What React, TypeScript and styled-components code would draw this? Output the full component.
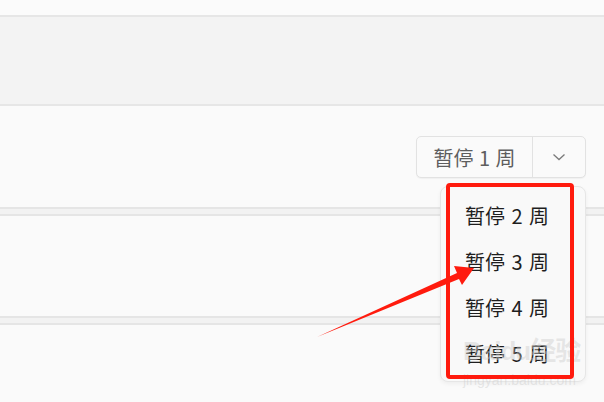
import React from 'react'
import styled, { createGlobalStyle } from 'styled-components'

const Global = createGlobalStyle`
  html, body {
    margin: 0;
    padding: 0;
    background: #fafafa;
    font-family: "Noto Sans CJK SC", "Noto Sans", sans-serif;
  }
`

const Page = styled.div`
  position: relative;
  width: 604px;
  height: 402px;
  overflow: hidden;
  background: #fafafa;
`

const TopStrip = styled.div`
  height: 15px;
  background: #fbfbfb;
`

const Band = styled.div`
  height: 87px;
  background: #f3f3f3;
  border-top: 2px solid #e6e6e6;
  border-bottom: 2px solid #e6e6e6;
`

const Toolbar = styled.div`
  height: 101px;
  display: flex;
  justify-content: flex-end;
  align-items: flex-start;
  padding: 30px 18px 0 0;
  box-sizing: border-box;
`

const SplitButton = styled.div`
  display: flex;
  height: 42px;
  border: 1px solid #e2e2e2;
  border-radius: 5px;
  background: #fafafa;
  box-sizing: border-box;
  box-shadow: 0 1px 1px rgba(0, 0, 0, 0.04);
`

const MainPart = styled.div`
  width: 115px;
  display: flex;
  align-items: center;
  justify-content: center;
  color: #5e5e5e;
  font-size: 20px;
  word-spacing: 1px;
  border-right: 1px solid #e2e2e2;
`

const ArrowPart = styled.div`
  width: 52px;
  display: flex;
  align-items: center;
  justify-content: center;
  color: #777;
`

const Divider = styled.div`
  height: 5px;
  background: #f2f2f2;
  border-top: 2px solid #e5e5e5;
  border-bottom: 2px solid #e5e5e5;
`

const Row = styled.div`
  height: 100px;
`

const Menu = styled.div`
  position: absolute;
  left: 440px;
  top: 186px;
  width: 146px;
  height: 196px;
  box-sizing: border-box;
  padding-top: 5px;
  border: 1px solid #e6e6e6;
  border-radius: 8px;
  background: #f9f9f9;
  box-shadow: 0 2px 4px rgba(0, 0, 0, 0.05);
`

const MenuItem = styled.div`
  height: 46px;
  display: flex;
  align-items: center;
  padding-left: 24px;
  font-size: 20px;
  word-spacing: 2px;
  color: #1e1e1e;
`

const Highlight = styled.div`
  position: absolute;
  left: 446px;
  top: 183px;
  width: 128px;
  height: 196px;
  box-sizing: border-box;
  border: 4px solid #ff1b0e;
  border-radius: 4px;
`

const Watermark = styled.div`
  position: absolute;
  left: 463px;
  top: 338px;
  color: rgba(205, 205, 205, 0.45);
  font-family: "Liberation Sans", "Noto Sans CJK SC", sans-serif;
  line-height: 1;
  pointer-events: none;
`

const WmBig = styled.div`
  font-size: 26px;
  font-weight: bold;
  letter-spacing: -1px;
`

const WmSmall = styled.div`
  font-size: 14px;
  margin-top: 9px;
`

const Overlay = styled.svg`
  position: absolute;
  left: 0;
  top: 0;
  pointer-events: none;
`

export default function App() {
  return (
    <Page>
      <Global />
      <TopStrip />
      <Band />
      <Toolbar>
        <SplitButton>
          <MainPart>暂停 1 周</MainPart>
          <ArrowPart>
            <svg width="16" height="16" viewBox="0 0 16 16">
              <path d="M2.5 5.5 L8 10.5 L13.5 5.5" fill="none" stroke="#7a7a7a" strokeWidth="1.3" />
            </svg>
          </ArrowPart>
        </SplitButton>
      </Toolbar>
      <Divider />
      <Row />
      <Divider />
      <Menu>
        {[2, 3, 4, 5].map((n) => (
          <MenuItem key={n}>暂停 {n} 周</MenuItem>
        ))}
      </Menu>
      <Watermark>
        <WmBig>Baidu经验</WmBig>
        <WmSmall>jingyan.baidu.com</WmSmall>
      </Watermark>
      <Highlight />
      <Overlay width="604" height="402" viewBox="0 0 604 402">
        <path
          d="M317 337 L459 279 L462 285 L474 268 L454 266 L457 273 Z"
          fill="#ff1b0e"
        />
      </Overlay>
    </Page>
  )
}
